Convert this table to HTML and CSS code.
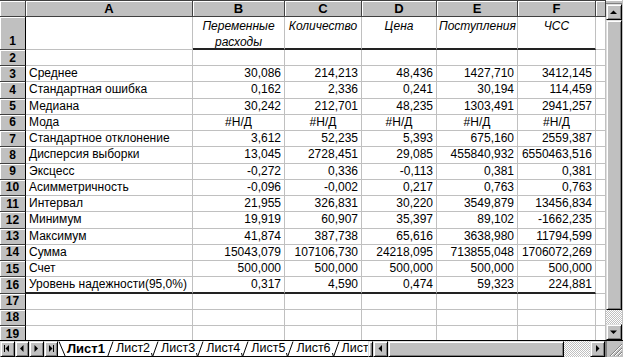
FILE: index.html
```
<!DOCTYPE html>
<html lang="ru">
<head>
<meta charset="utf-8">
<title>Описательная статистика</title>
<link rel="stylesheet" href="styles.css">
</head>
<body>
<div class="app">
  <div class="main">
    <div class="sheet">
      <div class="row hrow">
        <div class="corner"></div><div class="ch">A</div><div class="ch">B</div><div class="ch">C</div><div class="ch">D</div><div class="ch">E</div><div class="ch">F</div><div class="ch"></div>
      </div>
      <div class="row r1">
        <div class="rh">1</div><div class="c"></div><div class="c t">Переменные расходы</div><div class="c t">Количество</div><div class="c t">Цена</div><div class="c t">Поступления</div><div class="c t">ЧСС</div><div class="c"></div>
      </div>
      <div class="row r2">
        <div class="rh">2</div><div class="c"></div><div class="c"></div><div class="c"></div><div class="c"></div><div class="c"></div><div class="c"></div><div class="c"></div>
      </div>
      <div class="row">
        <div class="rh">3</div><div class="c">Среднее</div><div class="c n">30,086</div><div class="c n">214,213</div><div class="c n">48,436</div><div class="c n">1427,710</div><div class="c n">3412,145</div><div class="c"></div>
      </div>
      <div class="row">
        <div class="rh">4</div><div class="c">Стандартная ошибка</div><div class="c n">0,162</div><div class="c n">2,336</div><div class="c n">0,241</div><div class="c n">30,194</div><div class="c n">114,459</div><div class="c"></div>
      </div>
      <div class="row">
        <div class="rh">5</div><div class="c">Медиана</div><div class="c n">30,242</div><div class="c n">212,701</div><div class="c n">48,235</div><div class="c n">1303,491</div><div class="c n">2941,257</div><div class="c"></div>
      </div>
      <div class="row">
        <div class="rh">6</div><div class="c">Мода</div><div class="c na">#Н/Д</div><div class="c na">#Н/Д</div><div class="c na">#Н/Д</div><div class="c na">#Н/Д</div><div class="c na">#Н/Д</div><div class="c"></div>
      </div>
      <div class="row">
        <div class="rh">7</div><div class="c">Стандартное отклонение</div><div class="c n">3,612</div><div class="c n">52,235</div><div class="c n">5,393</div><div class="c n">675,160</div><div class="c n">2559,387</div><div class="c"></div>
      </div>
      <div class="row">
        <div class="rh">8</div><div class="c">Дисперсия выборки</div><div class="c n">13,045</div><div class="c n">2728,451</div><div class="c n">29,085</div><div class="c n">455840,932</div><div class="c n">6550463,516</div><div class="c"></div>
      </div>
      <div class="row">
        <div class="rh">9</div><div class="c">Эксцесс</div><div class="c n">-0,272</div><div class="c n">0,336</div><div class="c n">-0,113</div><div class="c n">0,381</div><div class="c n">0,381</div><div class="c"></div>
      </div>
      <div class="row">
        <div class="rh">10</div><div class="c">Асимметричность</div><div class="c n">-0,096</div><div class="c n">-0,002</div><div class="c n">0,217</div><div class="c n">0,763</div><div class="c n">0,763</div><div class="c"></div>
      </div>
      <div class="row">
        <div class="rh">11</div><div class="c">Интервал</div><div class="c n">21,955</div><div class="c n">326,831</div><div class="c n">30,220</div><div class="c n">3549,879</div><div class="c n">13456,834</div><div class="c"></div>
      </div>
      <div class="row">
        <div class="rh">12</div><div class="c">Минимум</div><div class="c n">19,919</div><div class="c n">60,907</div><div class="c n">35,397</div><div class="c n">89,102</div><div class="c n">-1662,235</div><div class="c"></div>
      </div>
      <div class="row">
        <div class="rh">13</div><div class="c">Максимум</div><div class="c n">41,874</div><div class="c n">387,738</div><div class="c n">65,616</div><div class="c n">3638,980</div><div class="c n">11794,599</div><div class="c"></div>
      </div>
      <div class="row">
        <div class="rh">14</div><div class="c">Сумма</div><div class="c n">15043,079</div><div class="c n">107106,730</div><div class="c n">24218,095</div><div class="c n">713855,048</div><div class="c n">1706072,269</div><div class="c"></div>
      </div>
      <div class="row">
        <div class="rh">15</div><div class="c">Счет</div><div class="c n">500,000</div><div class="c n">500,000</div><div class="c n">500,000</div><div class="c n">500,000</div><div class="c n">500,000</div><div class="c"></div>
      </div>
      <div class="row tot">
        <div class="rh">16</div><div class="c">Уровень надежности(95,0%)</div><div class="c n">0,317</div><div class="c n">4,590</div><div class="c n">0,474</div><div class="c n">59,323</div><div class="c n">224,881</div><div class="c g"></div>
      </div>
      <div class="row">
        <div class="rh">17</div><div class="c"></div><div class="c"></div><div class="c"></div><div class="c"></div><div class="c"></div><div class="c"></div><div class="c"></div>
      </div>
      <div class="row">
        <div class="rh">18</div><div class="c"></div><div class="c"></div><div class="c"></div><div class="c"></div><div class="c"></div><div class="c"></div><div class="c"></div>
      </div>
      <div class="row">
        <div class="rh">19</div><div class="c"></div><div class="c"></div><div class="c"></div><div class="c"></div><div class="c"></div><div class="c"></div><div class="c"></div>
      </div>
    </div>
    <div class="vscroll">
      <div class="splitbox"></div>
      <div class="btn arrow"><svg width="8" height="5" viewBox="0 0 8 5"><polygon points="0,4 7,4 3.5,0.5" fill="#000"/></svg></div>
      <div class="thumb vthumb"></div>
      <div class="track"></div>
      <div class="btn arrow"><svg width="8" height="5" viewBox="0 0 8 5"><polygon points="0,0.5 7,0.5 3.5,4" fill="#000"/></svg></div>
    </div>
  </div>
  <div class="bar">
    <div class="navs">
      <div class="btn nav"><svg width="8" height="8" viewBox="0 0 8 8"><rect x="1" y="0" width="1" height="7" fill="#000"/><polygon points="6,0 6,7 2.5,3.5" fill="#000"/></svg></div>
      <div class="btn nav"><svg width="8" height="8" viewBox="0 0 8 8"><polygon points="5.5,0 5.5,7 2,3.5" fill="#000"/></svg></div>
      <div class="btn nav"><svg width="8" height="8" viewBox="0 0 8 8"><polygon points="2.5,0 2.5,7 6,3.5" fill="#000"/></svg></div>
      <div class="btn nav"><svg width="8" height="8" viewBox="0 0 8 8"><polygon points="2,0 2,7 5.5,3.5" fill="#000"/><rect x="6" y="0" width="1" height="7" fill="#000"/></svg></div>
    </div>
    <div class="tabstrip">
      <svg class="sep" width="9" height="17" viewBox="0 0 9 17"><path d="M1 0.5 L7.5 16" stroke="#000" fill="none"/></svg>
      <span class="tab active">Лист1</span>
      <svg class="sep" width="8" height="17" viewBox="0 0 8 17"><path d="M7 0.5 L1.5 16" stroke="#000" fill="none"/></svg>
      <span class="tab">Лист2</span>
      <svg class="sep" width="8" height="17" viewBox="0 0 8 17"><path d="M7 0.5 L1.5 16 M1.5 16 L0.5 12" stroke="#000" fill="none"/></svg>
      <span class="tab">Лист3</span>
      <svg class="sep" width="8" height="17" viewBox="0 0 8 17"><path d="M7 0.5 L1.5 16 M1.5 16 L0.5 12" stroke="#000" fill="none"/></svg>
      <span class="tab">Лист4</span>
      <svg class="sep" width="8" height="17" viewBox="0 0 8 17"><path d="M7 0.5 L1.5 16 M1.5 16 L0.5 12" stroke="#000" fill="none"/></svg>
      <span class="tab">Лист5</span>
      <svg class="sep" width="8" height="17" viewBox="0 0 8 17"><path d="M7 0.5 L1.5 16 M1.5 16 L0.5 12" stroke="#000" fill="none"/></svg>
      <span class="tab">Лист6</span>
      <svg class="sep" width="8" height="17" viewBox="0 0 8 17"><path d="M7 0.5 L1.5 16 M1.5 16 L0.5 12" stroke="#000" fill="none"/></svg>
      <span class="tab">Лист7</span>
    </div>
    <div class="btn splitter"></div>
    <div class="hscroll">
      <div class="btn harrow"><svg width="5" height="8" viewBox="0 0 5 8"><polygon points="4,0 4,7 0.5,3.5" fill="#000"/></svg></div>
      <div class="thumb hthumb"></div>
      <div class="track"></div>
      <div class="btn harrow"><svg width="5" height="8" viewBox="0 0 5 8"><polygon points="1,0 1,7 4.5,3.5" fill="#000"/></svg></div>
    </div>
    <div class="grip"><svg width="16" height="16" viewBox="0 0 16 16"><path d="M15 3 L3 15 M15 7 L7 15 M15 11 L11 15" stroke="#808080" fill="none"/><path d="M15 4 L4 15 M15 8 L8 15 M15 12 L12 15" stroke="#fff" fill="none"/></svg></div>
  </div>
</div>
</body>
</html>
```
FILE: styles.css
```
* { box-sizing: border-box; }
html, body { margin: 0; padding: 0; }
body {
  width: 623px;
  height: 357px;
  overflow: hidden;
  background: #c0c0c0;
  font-family: "Liberation Sans", Arial, sans-serif;
  font-size: 12px;
  color: #000;
}
.app { width: 623px; height: 357px; display: flex; flex-direction: column; }
.main { height: 340px; display: flex; }
.sheet { width: 606px; height: 340px; overflow: hidden; background: #fff; }

.row {
  display: grid;
  grid-template-columns: 26px 167px 92px 77px 75px 81px 78px 10px;
  height: 16.25px;
}
.hrow { height: 17px; }
.r1 { height: 33px; }
.r2 { height: 16px; }

.corner, .ch, .rh {
  background: #c0c0c0;
  border-right: 1px solid #404040;
  border-bottom: 1px solid #404040;
  box-shadow: inset 1px 1px #fff;
  font-weight: bold;
}
.corner { border-top: 1px solid #404040; }
.ch {
  border-top: 1px solid #404040;
  font-size: 13px;
  line-height: 15px;
  text-align: center;
}
.rh {
  font-size: 12px;
  display: flex;
  align-items: center;
  justify-content: center;
  border-right-color: #000;
}
.r1 .rh { align-items: flex-end; padding-bottom: 1px; }

.c {
  border-right: 1px solid #c0c0c0;
  border-bottom: 1px solid #c0c0c0;
  padding: 0 3px 0 3px;
  font-size: 12px;
  line-height: 15px;
  white-space: nowrap;
  overflow: hidden;
}
.n { text-align: right; }
.na { text-align: center; }
.t {
  white-space: normal;
  text-align: center;
  font-style: italic;
  line-height: 16px;
  padding: 1px 2px 0;
  border-bottom: 2px solid #222;
}
.tot .c { border-bottom: 2px solid #222; }
.tot .c.g { border-bottom: 1px solid #c0c0c0; }

.btn {
  background: #c0c0c0;
  border: 1px solid;
  border-color: #dfdfdf #000 #000 #dfdfdf;
  box-shadow: inset 1px 1px #fff, inset -1px -1px #808080;
  display: flex;
  align-items: center;
  justify-content: center;
}
.thumb {
  background: #c0c0c0;
  border: 1px solid;
  border-color: #dfdfdf #000 #000 #dfdfdf;
  box-shadow: inset 1px 1px #fff, inset -1px -1px #808080;
}
.track {
  flex: 1;
  background: repeating-conic-gradient(#c0c0c0 0 25%, #fff 0 50%) 0 0 / 2px 2px;
}

.vscroll {
  width: 17px;
  height: 340px;
  display: flex;
  flex-direction: column;
  padding-right: 1px;
  background: #c0c0c0;
}
.splitbox {
  height: 4px;
  background: #c0c0c0;
  border-bottom: 1px solid #808080;
  box-shadow: inset 0 1px #fff;
}
.vscroll .arrow { height: 16px; }
.vthumb { height: 290px; }

.bar {
  height: 17px;
  display: flex;
  background: #c0c0c0;
  border-top: 1px solid #000;
}
.navs { width: 58px; display: flex; }
.nav { width: 14.5px; height: 16px; }
.tabstrip {
  width: 310px;
  display: flex;
  align-items: stretch;
  background: #fff;
  border-bottom: 1px solid #000;
  overflow: hidden;
  font-size: 12.5px;
  white-space: nowrap;
}
.sep { flex: none; display: block; }
.tab { padding: 0 1px 0 2px; line-height: 15px; }
.tab.active { font-weight: bold; font-size: 13px; padding: 0 1px 0 0; }
.splitter { width: 5px; height: 16px; }
.hscroll { width: 232px; display: flex; height: 16px; }
.harrow { width: 15px; height: 16px; }
.hthumb { width: 176px; }
.grip {
  width: 18px;
  height: 16px;
  border-left: 2px solid #808080;
  display: flex;
  align-items: flex-end;
  justify-content: flex-end;
}
```
